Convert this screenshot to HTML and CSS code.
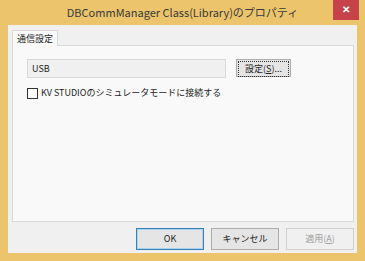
FILE: index.html
```html
<!DOCTYPE html>
<html lang="ja">
<head>
    <meta charset="utf-8">
    <title>DBCommManager Class(Library)のプロパティ</title>
    <link rel="stylesheet" href="styles.css">
</head>
<body>
    <div class="window">
        <div class="titlebar">
            <span class="title">DBCommManager Class(Library)のプロパティ</span>
            <button class="close">&#x2715;</button>
        </div>
        <div class="client">
            <div class="tabs">
                <div class="tab">通信設定</div>
            </div>
            <div class="panel">
                <div class="row">
                    <div class="field">USB</div>
                    <button class="btn setup"><span class="focus">設定(<u>S</u>)...</span></button>
                </div>
                <label class="check">
                    <span class="box"></span>
                    KV STUDIOのシミュレータモードに接続する
                </label>
            </div>
            <div class="footer">
                <button class="btn default">OK</button>
                <button class="btn">キャンセル</button>
                <button class="btn disabled">適用(<u>A</u>)</button>
            </div>
        </div>
    </div>
</body>
</html>
```

FILE: styles.css
```css
body {
    margin: 0;
    background-color: #EBC46B;
    font-family: "Noto Sans CJK JP", "Noto Sans", sans-serif;
    font-size: 9px;
    line-height: 12px;
    color: #1e1e1e;
}

.window {
    width: 365px;
    height: 261px;
    display: flex;
    flex-direction: column;
    background-color: #EBC46B;
}

.titlebar {
    height: 25px;
    flex-shrink: 0;
    position: relative;
    display: flex;
    justify-content: center;
    align-items: center;
}

.title {
    font-size: 11px;
    line-height: 14px;
    color: #3a3a3a;
    margin-top: -1px;
}

.close {
    position: absolute;
    top: 0;
    left: 333px;
    width: 26px;
    height: 20px;
    border: none;
    background-color: #C7434A;
    color: white;
    font-size: 10px;
    line-height: 20px;
    font-weight: bold;
    padding: 0;
}

.client {
    margin: 0 8px 8px 8px;
    height: 228px;
    background-color: #F0F0F0;
    display: flex;
    flex-direction: column;
    padding: 5px 3px 0 4px;
    box-sizing: border-box;
}

.tabs {
    display: flex;
    height: 15px;
}

.tab {
    background-color: #F9F9F9;
    border: 1px solid #D9D9D9;
    border-bottom: none;
    padding: 0 4px;
    line-height: 15px;
    height: 15px;
    position: relative;
    z-index: 1;
}

.panel {
    height: 177px;
    box-sizing: border-box;
    background-color: #F9F9F9;
    border: 1px solid #D9D9D9;
    padding: 13px 14px;
    display: flex;
    flex-direction: column;
    gap: 9px;
}

.row {
    display: flex;
    gap: 10px;
}

.field {
    width: 193px;
    height: 17px;
    line-height: 17px;
    padding-left: 4px;
    background-color: #F0F0F0;
    border: 1px solid #D9D9D9;
}

.btn {
    font-family: inherit;
    font-size: 9px;
    line-height: 12px;
    color: #1e1e1e;
    background-color: #E5E5E5;
    border: 1px solid #ACACAC;
    padding: 0;
}

.setup {
    width: 55px;
    height: 18px;
    padding: 1px;
}

.focus {
    display: block;
    height: 14px;
    line-height: 14px;
    border: 1px dotted #333;
}

.check {
    display: flex;
    align-items: center;
    gap: 3px;
}

.box {
    width: 9px;
    height: 9px;
    background-color: white;
    border: 1px solid #333;
}

.footer {
    display: flex;
    justify-content: flex-end;
    gap: 7px;
    padding-top: 6px;
}

.footer .btn {
    width: 68px;
    height: 22px;
}

.default {
    border-color: #3C7FB1;
    box-shadow: inset 0 0 0 1px #A9D3F3;
}

.disabled {
    color: #A0A0A0;
    background-color: #F0F0F0;
    border-color: #D0D0D0;
}
```
